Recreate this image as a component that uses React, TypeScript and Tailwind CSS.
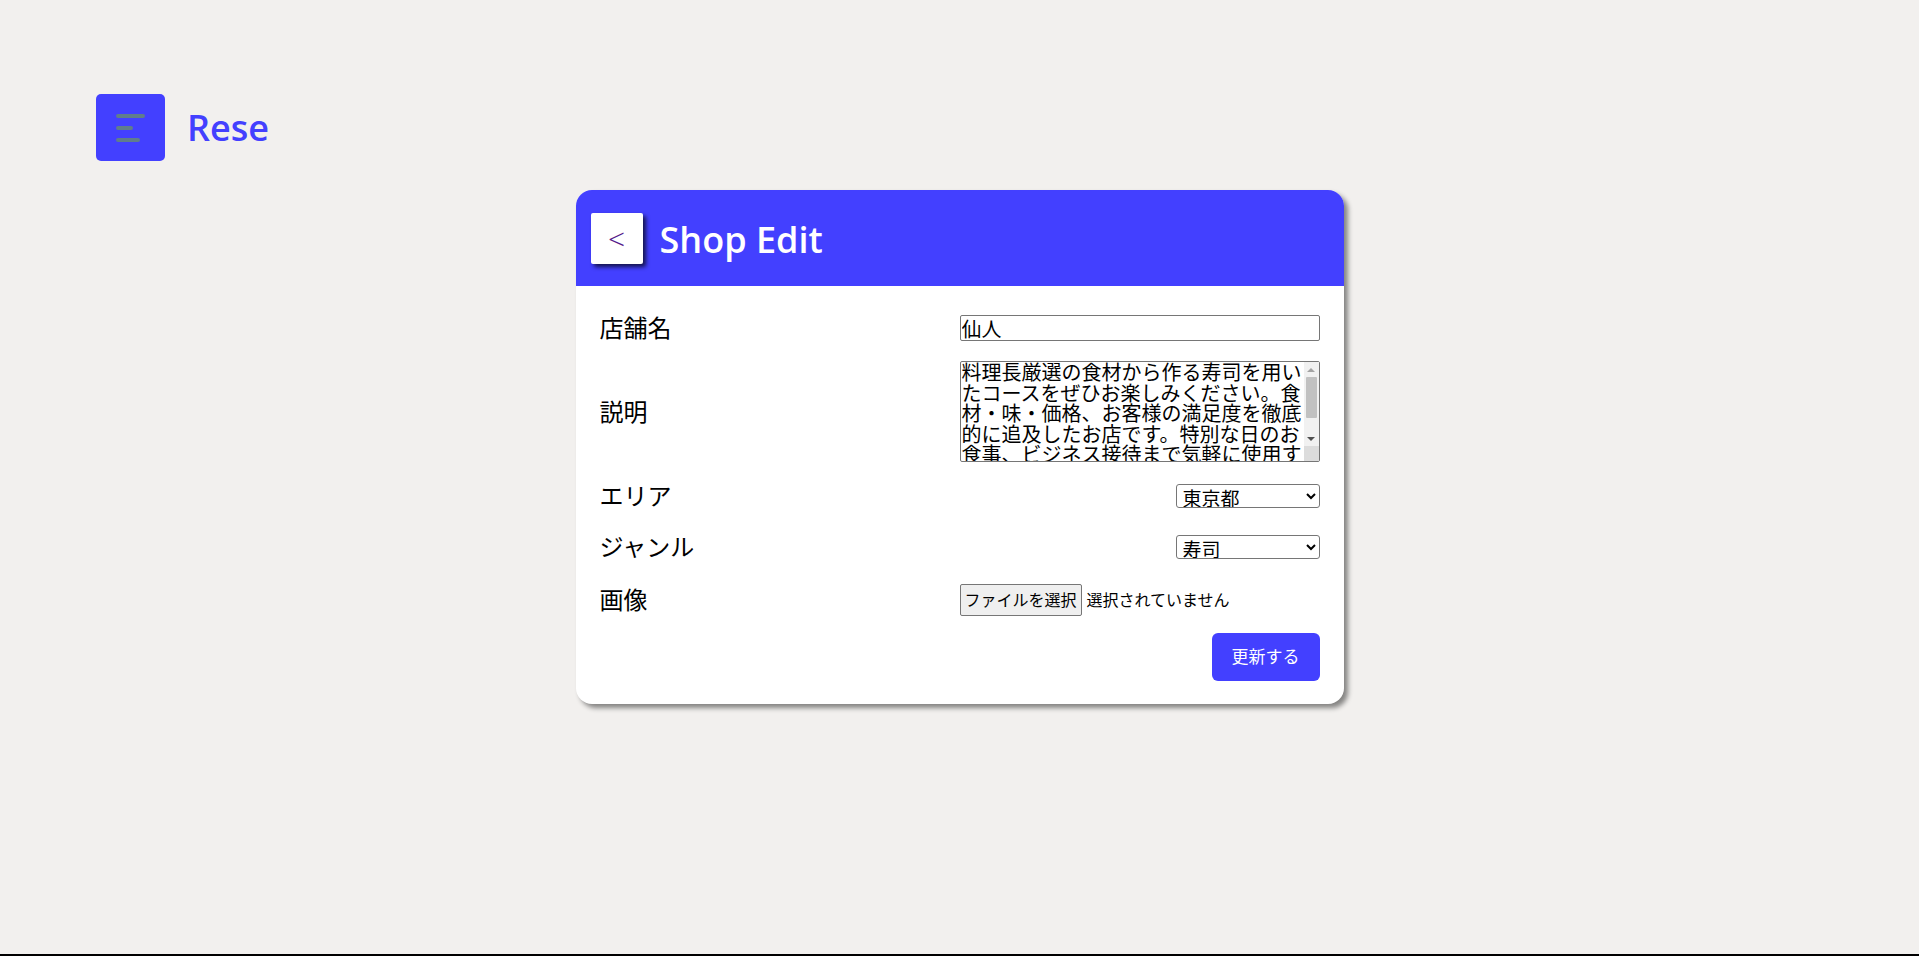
import React from 'react';

const description =
  '料理長厳選の食材から作る寿司を用いたコースをぜひお楽しみください。食材・味・価格、お客様の満足度を徹底的に追及したお店です。特別な日のお食事、ビジネス接待まで気軽に使用することができます。';

function Header() {
  return (
    <header className="flex items-center gap-[22px] pl-[96px] pt-[94px]">
      <button className="flex h-[67px] w-[69px] flex-col items-start justify-center gap-[8px] rounded-[5px] bg-[#4340ff] pl-[20px]">
        <span className="h-[4px] w-[29px] rounded-full bg-[#607d8b]" />
        <span className="h-[4px] w-[17px] rounded-full bg-[#607d8b]" />
        <span className="h-[4px] w-[24px] rounded-full bg-[#607d8b]" />
      </button>
      <h1 className="text-[36px] font-semibold text-[#4340ff]">Rese</h1>
    </header>
  );
}

// looks of the classic scrollbar in the reference
function FakeScrollbar() {
  return (
    <div className="pointer-events-none absolute top-[1px] right-[1px] bottom-[1px] flex w-[15px] flex-col bg-[#f1f1f1]">
      <div className="flex h-[15px] items-center justify-center">
        <span className="h-0 w-0 border-x-[4px] border-b-[4px] border-x-transparent border-b-[#a3a3a3]" />
      </div>
      <div className="mx-[2px] h-[41px] rounded-[1px] bg-[#c1c1c1]" />
      <div className="flex-1" />
      <div className="flex h-[15px] items-center justify-center">
        <span className="h-0 w-0 border-x-[4px] border-t-[4px] border-x-transparent border-t-[#505050]" />
      </div>
      <div className="h-[15px] bg-[#dcdcdc]" />
    </div>
  );
}

function ShopEdit() {
  return (
    <main className="mx-auto mt-[29px] w-[768px] overflow-hidden rounded-[16px] bg-white shadow-[4px_4px_5px_rgba(0,0,0,0.45)]">
      <div className="flex h-[96px] items-center gap-[17px] bg-[#4340ff] pl-[15px]">
        <a
          href="#"
          className="flex h-[51px] w-[52px] items-center justify-center rounded-[2px] bg-white text-[30px] font-light text-[#551a8b] shadow-[3px_3px_4px_rgba(0,0,0,0.7)]"
        >
          &lt;
        </a>
        <h2 className="pt-[3px] text-[36px] font-semibold text-white">Shop Edit</h2>
      </div>

      <form className="px-[24px] pt-[26px] pb-[23px] text-black">
        <div className="grid grid-cols-2 items-center">
          <label className="h-[32px] text-[24px] leading-[32px]">店舗名</label>
          <input
            type="text"
            defaultValue="仙人"
            className="h-[26px] w-full rounded-[2px] border border-[#767676] px-[1px] text-[20px] leading-[24px]"
          />
        </div>

        <div className="mt-[17px] grid grid-cols-2 items-center">
          <label className="h-[32px] text-[24px] leading-[32px]">説明</label>
          <div className="relative h-[101px] w-full">
            <textarea
              defaultValue={description}
              className="h-full w-full resize-none overflow-hidden rounded-[2px] border border-[#767676] py-[1px] pr-[16px] pl-[1px] text-[20px] leading-[20.5px]"
            />
            <FakeScrollbar />
          </div>
        </div>

        <div className="mt-[18px] grid grid-cols-2 items-center">
          <label className="h-[32px] text-[24px] leading-[32px]">エリア</label>
          <select className="h-[24px] w-[144px] justify-self-end rounded-[3px] border border-[#767676] px-[2px] text-[19px] leading-[22px]">
            <option>東京都</option>
            <option>大阪府</option>
            <option>福岡県</option>
          </select>
        </div>

        <div className="mt-[19px] grid grid-cols-2 items-center">
          <label className="h-[32px] text-[24px] leading-[32px]">ジャンル</label>
          <select className="h-[24px] w-[144px] justify-self-end rounded-[3px] border border-[#767676] px-[2px] text-[19px] leading-[22px]">
            <option>寿司</option>
            <option>焼肉</option>
            <option>居酒屋</option>
            <option>イタリアン</option>
            <option>ラーメン</option>
          </select>
        </div>

        <div className="mt-[21px] grid grid-cols-2 items-center">
          <label className="h-[32px] text-[24px] leading-[32px]">画像</label>
          <div className="flex items-center gap-[5px]">
            <span className="flex h-[32px] w-[122px] items-center justify-center rounded-[2px] border border-[#767676] bg-[#efefef] text-[16px]">
              ファイルを選択
            </span>
            <span className="text-[16px]">選択されていません</span>
          </div>
        </div>

        <div className="mt-[17px] flex justify-end">
          <button
            type="button"
            className="h-[48px] w-[108px] rounded-[6px] bg-[#4340ff] text-[17px] text-white"
          >
            更新する
          </button>
        </div>
      </form>
    </main>
  );
}

export default function App() {
  return (
    <div className="h-[956px] border-b-2 border-black bg-[#f2f0ee] font-['Open_Sans','Noto_Sans_CJK_JP',sans-serif]">
      <Header />
      <ShopEdit />
    </div>
  );
}
